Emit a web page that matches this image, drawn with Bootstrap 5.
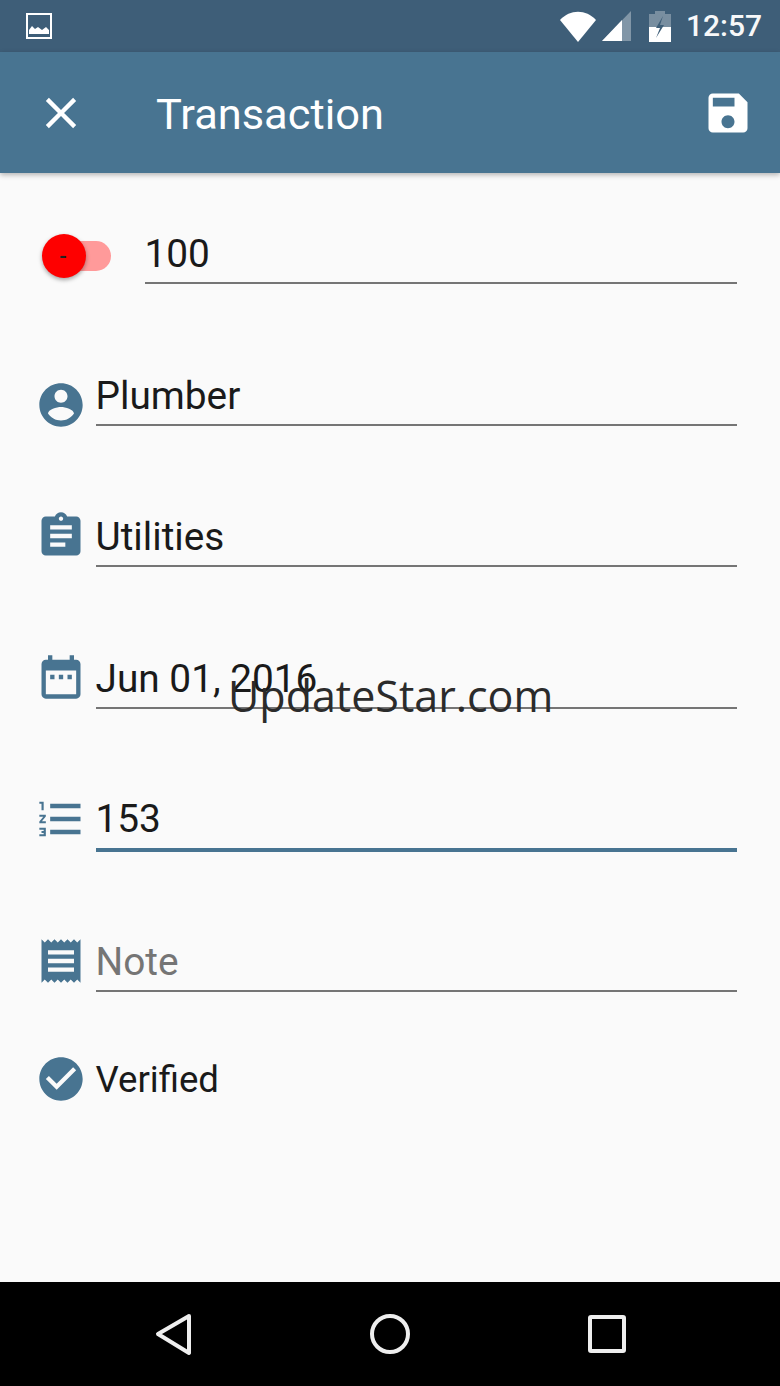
<!DOCTYPE html>
<html lang="en">
<head>
    <meta charset="UTF-8">
    <meta name="viewport" content="width=device-width, initial-scale=1.0">
    <title>Transaction</title>
    <link href="https://cdn.jsdelivr.net/npm/bootstrap@5.3.0/dist/css/bootstrap.min.css" rel="stylesheet">
    <style>
        body { background: #fafafa; font-family: Roboto, "Liberation Sans", sans-serif; color: #1a1a1a; overflow: hidden; }
        .status-strip { height: 52px; background: #3e5e78; color: #fff; padding: 0 18px 0 26px; flex-shrink: 0; }
        .status-time { font-size: 30px; font-weight: 500; line-height: 1; margin-left: 15px; opacity: .96; }
        .battery-glyph { margin-left: 17px; }
        .app-toolbar { height: 121px; background: #487491; padding: 0 26px 0 35px; flex-shrink: 0; box-shadow: 0 2px 5px rgba(0,0,0,.28); z-index: 2; }
        .app-title { font-size: 43.4px; color: #fff; line-height: 1; margin-left: 69px; padding-top: 4px; }
        .form-area { padding: 35px 43.5px 0 34.5px; position: relative; }
        .entry-row { height: 76px; margin-bottom: 65.5px; }
        .entry-icon { width: 52px; height: 52px; flex-shrink: 0; margin-right: 9px; fill: #487491; }
        .entry-field { flex-grow: 1; border-bottom: 2px solid #757575; font-size: 38.8px; line-height: 44px; padding-bottom: 6px; height: 76px; display: flex; align-items: flex-end; }
        .entry-field.is-active { border-bottom: 4px solid #487491; height: 77px; margin-bottom: -2px; padding-bottom: 7px; }
        .entry-field.is-hint { color: #757575; }
        .icon-person { margin-bottom: -5px; }
        .icon-task { margin-bottom: 5px; }
        .icon-date { margin-bottom: 6px; }
        .icon-list { margin-bottom: 5px; }
        .icon-note { margin-bottom: 5px; }
        .verified-row { font-size: 36.6px; line-height: 44px; margin-top: -4px; }
        .verified-label { padding-top: 2px; }
        .sign-switch { width: 69px; height: 44px; margin: 0 33.5px 6px 7.5px; flex-shrink: 0; }
        .sign-track { left: 21px; right: 0; top: 7px; height: 30px; border-radius: 15px; background: #ff9a9a; }
        .sign-thumb { left: 0; top: 0; width: 44px; height: 44px; border-radius: 50%; background: #fe0000; box-shadow: 0 2px 4px rgba(0,0,0,.35); color: #212121; font-size: 22px; font-weight: 500; line-height: 46px; text-align: center; padding-right: 2px; }
        .site-mark { left: 228px; top: 494px; font-family: "Open Sans", sans-serif; font-size: 43px; line-height: 1.35; color: #2b2b2b; white-space: nowrap; }
        .nav-strip { height: 104px; background: #000; flex-shrink: 0; }
    </style>
</head>
<body class="d-flex flex-column vh-100">

<!-- Status bar -->
<div class="status-strip d-flex align-items-center">
    <svg width="26" height="26" viewBox="0 0 26 26"><rect x="1" y="1" width="24" height="24" fill="none" stroke="#fff" stroke-width="2"/><path d="M3 21v-4l3-4 3 3 3-2 4 3 4-3 3 3v4z" fill="#fff"/></svg>
    <div class="ms-auto d-flex align-items-center">
        <svg width="38" height="32" viewBox="0 0 38 32"><path d="M1 10C11 -1 27 -1 37 10L19 32z" fill="#fff"/></svg>
        <svg class="ms-1" width="31" height="32" viewBox="0 0 31 32"><path d="M30 1V31H1z" fill="#fff" opacity=".35"/><path d="M21 10V31H1z" fill="#fff"/></svg>
        <svg class="battery-glyph" width="22" height="32" viewBox="0 0 22 32"><path d="M6 1h10v3h6v13H0V4h6z" fill="#fff" opacity=".3"/><path d="M0 17h22v15H0z" fill="#fff"/><path d="M14 6L7 18h4l-4 10 8-13h-4z" fill="#3e5e78"/></svg>
        <span class="status-time">12:57</span>
    </div>
</div>

<!-- Toolbar -->
<nav class="app-toolbar d-flex align-items-center">
    <svg width="52" height="52" viewBox="0 0 24 24" fill="#fff"><path d="M19 6.41L17.59 5 12 10.59 6.41 5 5 6.41 10.59 12 5 17.59 6.41 19 12 13.41 17.59 19 19 17.59 13.41 12z"/></svg>
    <span class="app-title">Transaction</span>
    <svg class="ms-auto" width="52" height="52" viewBox="0 0 24 24" fill="#fff"><path d="M17 3H5c-1.11 0-2 .9-2 2v14c0 1.1.89 2 2 2h14c1.1 0 2-.9 2-2V7l-4-4zm-5 16c-1.66 0-3-1.34-3-3s1.34-3 3-3 3 1.34 3 3-1.34 3-3 3zm3-10H5V5h10v4z"/></svg>
</nav>

<!-- Form -->
<main class="form-area flex-grow-1">
    <div class="entry-row d-flex align-items-end">
        <div class="sign-switch position-relative">
            <div class="sign-track position-absolute"></div>
            <div class="sign-thumb position-absolute">-</div>
        </div>
        <div class="entry-field">100</div>
    </div>
    <div class="entry-row d-flex align-items-end">
        <svg class="entry-icon icon-person" viewBox="0 0 24 24"><path d="M12 2C6.48 2 2 6.48 2 12s4.48 10 10 10 10-4.48 10-10S17.52 2 12 2zm0 3c1.66 0 3 1.34 3 3s-1.34 3-3 3-3-1.34-3-3 1.34-3 3-3zm0 14.2c-2.5 0-4.71-1.28-6-3.22.03-1.99 4-3.08 6-3.08 1.99 0 5.97 1.09 6 3.08-1.29 1.94-3.5 3.22-6 3.22z"/></svg>
        <div class="entry-field">Plumber</div>
    </div>
    <div class="entry-row d-flex align-items-end">
        <svg class="entry-icon icon-task" viewBox="0 0 24 24"><path d="M19 3h-4.18C14.4 1.84 13.3 1 12 1c-1.3 0-2.4.84-2.82 2H5c-1.1 0-2 .9-2 2v14c0 1.1.9 2 2 2h14c1.1 0 2-.9 2-2V5c0-1.1-.9-2-2-2zm-7 0c.55 0 1 .45 1 1s-.45 1-1 1-1-.45-1-1 .45-1 1-1zm2 14H7v-2h7v2zm3-4H7v-2h10v2zm0-4H7V7h10v2z"/></svg>
        <div class="entry-field">Utilities</div>
    </div>
    <div class="entry-row d-flex align-items-end">
        <svg class="entry-icon icon-date" viewBox="0 0 24 24"><path d="M9 11H7v2h2v-2zm4 0h-2v2h2v-2zm4 0h-2v2h2v-2zm2-7h-1V2h-2v2H8V2H6v2H5c-1.11 0-1.99.9-1.99 2L3 20c0 1.1.89 2 2 2h14c1.1 0 2-.9 2-2V6c0-1.1-.9-2-2-2zm0 16H5V9h14v11z"/></svg>
        <div class="entry-field">Jun 01, 2016</div>
    </div>
    <div class="entry-row d-flex align-items-end">
        <svg class="entry-icon icon-list" viewBox="0 0 24 24"><path d="M2 17h2v.5H3v1h1v.5H2v1h3v-4H2v1zm1-9h1V4H2v1h1v3zm-1 3h1.8L2 13.1v.9h3v-1H3.2L5 10.9V10H2v1zm5-6v2h14V5H7zm0 14h14v-2H7v2zm0-6h14v-2H7v2z"/></svg>
        <div class="entry-field is-active">153</div>
    </div>
    <div class="entry-row d-flex align-items-end">
        <svg class="entry-icon icon-note" viewBox="0 0 24 24"><path d="M18 17H6v-2h12v2zm0-4H6v-2h12v2zm0-4H6V7h12v2zM3 22l1.5-1.5L6 22l1.5-1.5L9 22l1.5-1.5L12 22l1.5-1.5L15 22l1.5-1.5L18 22l1.5-1.5L21 22V2l-1.5 1.5L18 2l-1.5 1.5L15 2l-1.5 1.5L12 2l-1.5 1.5L9 2 7.5 3.5 6 2 4.5 3.5 3 2v20z"/></svg>
        <div class="entry-field is-hint">Note</div>
    </div>
    <div class="verified-row d-flex align-items-center">
        <svg class="entry-icon" viewBox="0 0 24 24"><path d="M12 2C6.48 2 2 6.48 2 12s4.48 10 10 10 10-4.48 10-10S17.52 2 12 2zm-2 15l-5-5 1.41-1.41L10 14.17l7.59-7.59L19 8l-9 9z"/></svg>
        <span class="verified-label">Verified</span>
    </div>
    <!-- Watermark lying over the form -->
    <div class="site-mark position-absolute">UpdateStar.com</div>
</main>

<!-- Navigation bar -->
<footer class="nav-strip d-flex align-items-center position-relative">
    <svg class="w-100 h-100" viewBox="0 0 780 104" fill="none" stroke="#eee" stroke-width="4" stroke-linejoin="round">
        <path d="M189 34L158 52 189 71z"/>
        <circle cx="390" cy="52" r="18"/>
        <rect x="590" y="35" width="34" height="34" rx="1"/>
    </svg>
</footer>

<script src="https://cdn.jsdelivr.net/npm/bootstrap@5.3.0/dist/js/bootstrap.bundle.min.js"></script>
</body>
</html>
